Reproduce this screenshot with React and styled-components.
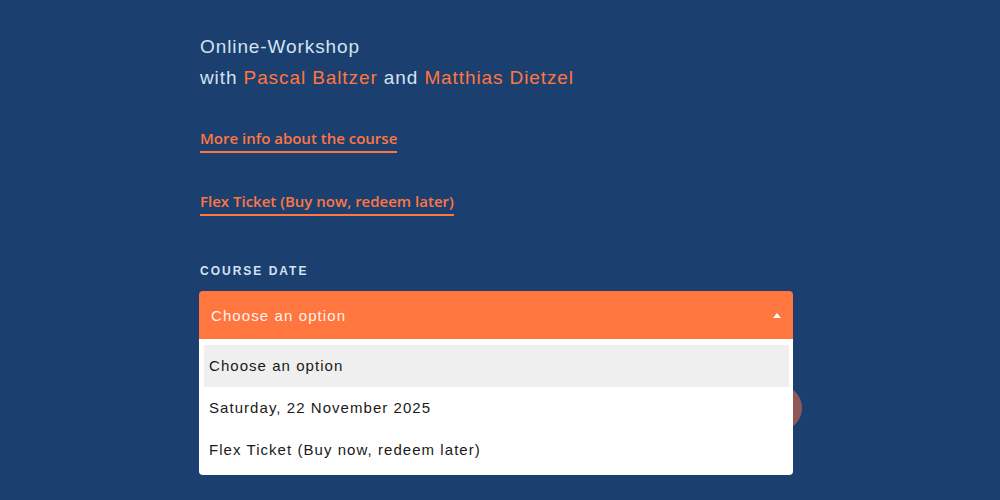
import React from 'react';
import styled, { createGlobalStyle } from 'styled-components';

const GlobalStyle = createGlobalStyle`
  html, body {
    margin: 0;
    padding: 0;
    background: #1b3f6f;
  }
  body {
    font-family: "Liberation Sans", Arial, sans-serif;
  }
`;

const Page = styled.div`
  width: 1000px;
  height: 500px;
  overflow: hidden;
  background: #1b3f6f;
  display: flex;
  justify-content: flex-start;
  padding-left: 199px;
  box-sizing: border-box;
`;

const Column = styled.div`
  width: 594px;
  padding-top: 31px;
  display: flex;
  flex-direction: column;
`;

const Intro = styled.p`
  margin: 0;
  color: #d4e2f4;
  font-size: 19px;
  line-height: 31px;
  letter-spacing: 0.9px;
  padding-left: 1px;
`;

const Name = styled.span`
  color: #ff7640;
`;

const Links = styled.div`
  display: flex;
  flex-direction: column;
  align-items: flex-start;
  gap: 38px;
  margin-top: 35px;
  padding-left: 1px;
`;

const TextLink = styled.a`
  font-family: "Open Sans", "Noto Sans", sans-serif;
  font-weight: 600;
  font-size: 15px;
  line-height: 20px;
  color: #ff7640;
  text-decoration: none;
  padding-bottom: 3px;
  border-bottom: 2px solid #ff7640;
`;

const Label = styled.div`
  margin-top: 48px;
  padding-left: 1px;
  color: #d4e2f4;
  font-size: 12px;
  font-weight: 700;
  letter-spacing: 2px;
  line-height: 14px;
  text-transform: uppercase;
`;

const Field = styled.div`
  position: relative;
  margin-top: 13px;
`;

const SelectBox = styled.div`
  height: 48px;
  background: #ff763e;
  border-radius: 4px 4px 0 0;
  display: flex;
  align-items: center;
  justify-content: space-between;
  padding: 0 12px;
  color: #fff3ec;
  font-size: 15px;
  letter-spacing: 1.1px;
`;

const Caret = styled.span`
  width: 0;
  height: 0;
  border-left: 4px solid transparent;
  border-right: 4px solid transparent;
  border-bottom: 5px solid #ffffff;
`;

const Menu = styled.ul`
  position: absolute;
  left: 0;
  right: 0;
  top: 48px;
  z-index: 2;
  margin: 0;
  padding: 6px 4px 4px 5px;
  list-style: none;
  background: #ffffff;
  border-radius: 0 0 4px 4px;
`;

const Option = styled.li`
  height: 42px;
  display: flex;
  align-items: center;
  padding-left: 5px;
  padding-bottom: 2px;
  box-sizing: border-box;
  font-size: 15px;
  letter-spacing: 1.05px;
  color: #1a1a1a;
  background: ${({ active }) => (active ? '#efefef' : 'transparent')};
`;

const ActionRow = styled.div`
  display: flex;
  justify-content: flex-end;
  margin-top: 46px;
  margin-right: -9px;
`;

const RoundButton = styled.button`
  width: 46px;
  height: 46px;
  border-radius: 50%;
  border: none;
  background: #ff7640;
  opacity: 0.5;
  padding: 0;
`;

export default function App() {
  return (
    <>
      <GlobalStyle />
      <Page>
        <Column>
          <Intro>
            Online-Workshop
            <br />
            with <Name>Pascal Baltzer</Name> and <Name>Matthias Dietzel</Name>
          </Intro>
          <Links>
            <TextLink href="#">More info about the course</TextLink>
            <TextLink href="#">Flex Ticket (Buy now, redeem later)</TextLink>
          </Links>
          <Label>Course Date</Label>
          <Field>
            <SelectBox>
              <span>Choose an option</span>
              <Caret />
            </SelectBox>
            <Menu>
              <Option active>Choose an option</Option>
              <Option>Saturday, 22 November 2025</Option>
              <Option>Flex Ticket (Buy now, redeem later)</Option>
            </Menu>
            <ActionRow>
              <RoundButton aria-label="Add" />
            </ActionRow>
          </Field>
        </Column>
      </Page>
    </>
  );
}
